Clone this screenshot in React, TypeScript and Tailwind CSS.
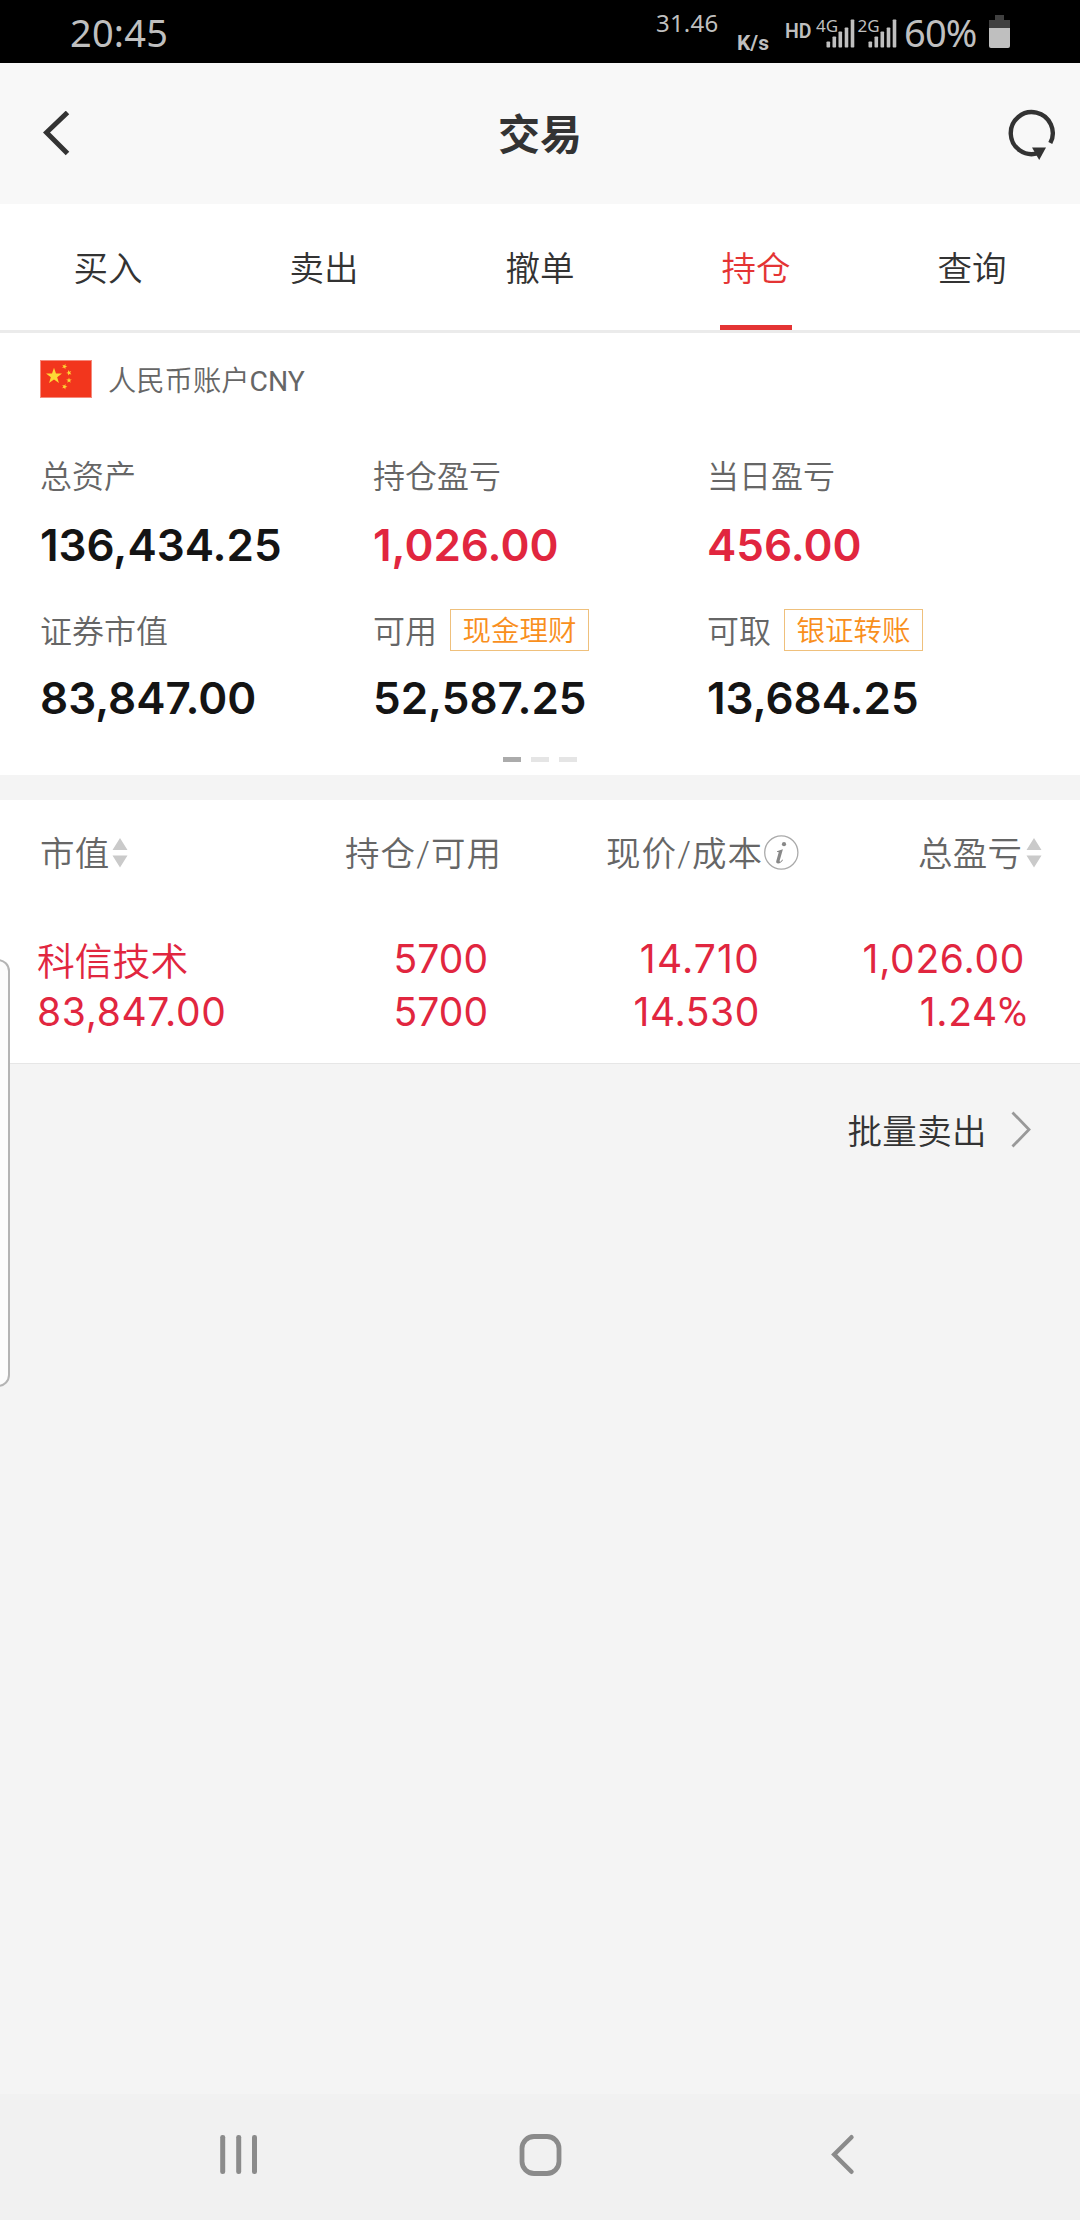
import type { ReactNode } from 'react'

const TABS = ['买入', '卖出', '撤单', '持仓', '查询']
const ACTIVE_TAB = '持仓'

interface Stat {
  label: string
  value: string
  action?: string
  gain?: boolean
}

const STATS: Stat[] = [
  { label: '总资产', value: '136,434.25' },
  { label: '持仓盈亏', value: '1,026.00', gain: true },
  { label: '当日盈亏', value: '456.00', gain: true },
  { label: '证券市值', value: '83,847.00' },
  { label: '可用', value: '52,587.25', action: '现金理财' },
  { label: '可取', value: '13,684.25', action: '银证转账' },
]

function SignalBars() {
  return (
    <svg width="29" height="29" viewBox="0 0 29 29" fill="#bfbfbf" aria-hidden="true">
      <rect x="0.5" y="22.5" width="3.6" height="6" rx="0.8" />
      <rect x="6.5" y="17.5" width="3.6" height="11" rx="0.8" />
      <rect x="12.5" y="12.5" width="3.6" height="16" rx="0.8" />
      <rect x="18.7" y="8.5" width="3.6" height="20" rx="0.8" />
      <rect x="24.7" y="0.5" width="3.6" height="28" rx="0.8" />
    </svg>
  )
}

function Signal({ network }: { network: string }) {
  return (
    <div className="relative flex h-[29px] w-[41.5px] items-end pl-[9px]">
      <SignalBars />
      <span className="absolute -left-px -top-px bg-black text-[17px] leading-[15px]">{network}</span>
    </div>
  )
}

function StatusBar() {
  return (
    <div className="flex h-[63px] items-start bg-black pl-[70px] font-['Noto_Sans',sans-serif] text-[#bfbfbf]">
      <span className="w-[586px] pt-[7px] text-[38px] leading-[50px] tracking-[0.2px]">20:45</span>
      <span className="w-[81px] pt-[6px] text-[24px] leading-[33px] tracking-[0.2px]">31.46</span>
      <span className="w-[48px] pt-[31px] font-[Roboto] text-[21px] font-bold leading-[24px]">K/s</span>
      <span className="w-[32px] pt-[20px] font-[Roboto] text-[19.5px] font-semibold leading-[24px]">HD</span>
      <div className="flex pt-[19px]">
        <Signal network="4G" />
        <Signal network="2G" />
      </div>
      <span className="ml-[4px] w-[85px] pt-[7px] text-[38px] leading-[50px] tracking-[-0.8px]">60%</span>
      <svg className="mt-[15px]" width="21" height="33" viewBox="0 0 21 33" aria-hidden="true">
        <path d="M6 0h9v5h6v8H0V5h6z" fill="#404040" />
        <path d="M0 13h21v18a2 2 0 0 1-2 2H2a2 2 0 0 1-2-2z" fill="#bfbfbf" />
      </svg>
    </div>
  )
}

function TitleBar() {
  return (
    <header className="flex h-[141px] items-center justify-between bg-[#f8f8f8] pl-[43px] pr-[24px]">
      <svg width="33" height="46" viewBox="0 0 33 46" fill="none" aria-hidden="true">
        <path d="M24.5 1.5 3.5 21.5 24.5 42.5" stroke="#333" strokeWidth="5" />
      </svg>
      <h1 className="pt-[4px] text-[42px] font-bold leading-[50px] text-[#333]">交易</h1>
      <svg width="52" height="52" viewBox="0 0 52 52" fill="none" aria-hidden="true">
        <path d="M46.3 35A21 21 0 1 0 34 45.2" stroke="#333" strokeWidth="4.4" />
        <path d="M28 39.5h14L35.2 52z" fill="#333" />
      </svg>
    </header>
  )
}

function TabBar() {
  return (
    <nav className="flex h-[129px] border-b-[3px] border-[#ebebeb]">
      {TABS.map((tab) => {
        const active = tab === ACTIVE_TAB
        return (
          <div key={tab} className="flex flex-1 flex-col items-center justify-between">
            <span
              className={`pt-[43px] text-[34.5px] font-[350] leading-[44px] ${active ? 'text-[#e43434]' : 'text-[#333]'}`}
            >
              {tab}
            </span>
            {active && <span className="h-[5px] w-[72px] bg-[#e43434]" />}
          </div>
        )
      })}
    </nav>
  )
}

function Flag() {
  const star = 'M0-8 1.9-2.5 7.6-2.5 3 1 4.7 6.5 0 3.2-4.7 6.5-3 1-7.6-2.5-1.9-2.5z'
  return (
    <svg width="52" height="38" viewBox="0 0 52 38" fill="#fdd835" aria-hidden="true">
      <rect x="0.5" y="0.5" width="51" height="37" fill="#f2361d" stroke="#f58a7c" />
      <path d={star} transform="translate(14 16.2) scale(1.05)" />
      <path d={star} transform="translate(24.5 6.5) rotate(20) scale(.36)" />
      <path d={star} transform="translate(29 12.8) rotate(-20) scale(.36)" />
      <path d={star} transform="translate(29 20.3) scale(.36)" />
      <path d={star} transform="translate(24.5 26.7) rotate(20) scale(.36)" />
    </svg>
  )
}

function AccountSummary() {
  return (
    <section className="h-[442px] pt-[27px] font-[350]">
      <div className="flex h-[38px] items-center gap-[16px] pl-[40px] text-[28.3px] text-[#666]">
        <Flag />
        <span className="pt-[6px] leading-[38px]">
          人民币账户<span className="font-normal">CNY</span>
        </span>
      </div>
      <div className="grid grid-cols-[333px_334px_1fr] pl-[40px] pt-[57px]">
        {STATS.map((stat, i) => (
          <div key={stat.label} className="h-[153px]">
            <div className="flex h-[44px] items-center text-[32px] leading-[44px] text-[#666]">
              <span className={i < 3 ? '' : 'pt-[3px]'}>{stat.label}</span>
              {stat.action && (
                <span className="ml-[13px] flex h-[42px] w-[139px] items-center justify-center border-[1.5px] border-[#efc07c] pt-[3px] text-[28.5px] text-[#f98f1c]">
                  {stat.action}
                </span>
              )}
            </div>
            <div
              className={`pt-[24px] font-[Inter] text-[44px] font-[570] leading-[44px] ${stat.gain ? 'text-[#e1263f]' : 'text-[#141414]'}`}
            >
              {stat.value}
            </div>
          </div>
        ))}
      </div>
      <div className="-mt-[4px] flex justify-center gap-[10px]">
        <span className="h-[5px] w-[18px] bg-[#ababab]" />
        <span className="h-[5px] w-[18px] bg-[#e5e5e5]" />
        <span className="h-[5px] w-[18px] bg-[#e5e5e5]" />
      </div>
    </section>
  )
}

function SortIcon() {
  return (
    <svg width="16" height="30" viewBox="0 0 16 30" fill="#cacaca" aria-hidden="true">
      <path d="M8 0 15.5 12H0.5zM8 29.5 0.5 17.5H15.5z" />
    </svg>
  )
}

function InfoIcon() {
  return (
    <svg width="35" height="36" viewBox="0 0 35 36" fill="none" aria-hidden="true">
      <circle cx="17.3" cy="17.5" r="16.6" stroke="#aaa" strokeWidth="1.3" />
      <circle cx="20" cy="9.2" r="2.1" fill="#888" />
      <path d="M13 16.2c2-.8 3.6-1.3 5.9-2l-3.2 11.4c-.3 1.1.3 1.3 1 .8.6-.4 1.1-1 1.7-1.8l.6.4c-1.5 2.3-3 3.4-4.8 3.4-1.7 0-2.3-1-1.9-2.5l2.3-8.1c.2-.8-.1-1-1.6-.9z" fill="#888" />
    </svg>
  )
}

function Cell({ top, bottom, className }: { top: ReactNode; bottom: ReactNode; className: string }) {
  return (
    <div className={`flex flex-col ${className}`}>
      <span className="h-[53px]">{top}</span>
      <span className="h-[53px]">{bottom}</span>
    </div>
  )
}

function Holdings() {
  return (
    <section className="h-[264px] border-b border-[#e6e6e6] bg-white">
      <div className="flex h-[106px] items-center text-[34.5px] font-[350] leading-[44px] text-[#666]">
        <div className="flex w-[345px] items-center gap-[2px] pl-[40px]">
          <span className="pt-[2px] tracking-[0.3px]">市值</span>
          <SortIcon />
        </div>
        <span className="w-[261px] pt-[2px] tracking-[1.1px]">持仓/可用</span>
        <div className="flex w-[312px] items-center gap-[1px]">
          <span className="pt-[2px] tracking-[1.1px]">现价/成本</span>
          <InfoIcon />
        </div>
        <div className="flex items-center gap-[4px]">
          <span className="pt-[2px] tracking-[0.3px]">总盈亏</span>
          <SortIcon />
        </div>
      </div>
      <div className="flex pt-[26px] font-[Inter,'Noto_Sans_CJK_SC',sans-serif] text-[39px] leading-[53px] text-[#e1263f]">
        <Cell
          className="w-[250px] pl-[37px]"
          top={<span className="block pt-[3px] text-[37.8px] font-[350]">科信技术</span>}
          bottom={<span className="tracking-[0.65px]">83,847.00</span>}
        />
        <Cell className="w-[238px] items-end" top="5700" bottom="5700" />
        <Cell
          className="w-[271px] items-end"
          top={<span className="-mr-px tracking-[1.2px]">14.710</span>}
          bottom={<span className="-mr-px tracking-[0.6px]">14.530</span>}
        />
        <Cell
          className="w-[266px] items-end"
          top={<span className="tracking-[0.7px]">1,026.00</span>}
          bottom={
            <span className="-mr-[2px]">
              <span className="tracking-[0.6px]">1.24</span>
              <span className="font-[Roboto] text-[40px]">%</span>
            </span>
          }
        />
      </div>
    </section>
  )
}

function NavigationBar() {
  return (
    <footer className="flex h-[126px] items-center bg-[#f1f1f1] pb-[4px] pl-[219px]">
      <svg width="300" height="42" viewBox="0 0 300 42" fill="#8b8b8b" aria-hidden="true">
        <rect x="1.2" y="1" width="5" height="39" rx="2.3" />
        <rect x="17.2" y="1" width="5" height="39" rx="2.3" />
        <rect x="33" y="1" width="5" height="39" rx="2.3" />
      </svg>
      <svg width="312" height="42" viewBox="0 0 312 42" fill="none" aria-hidden="true">
        <rect x="3" y="2.5" width="37" height="37" rx="12" stroke="#8b8b8b" strokeWidth="4.8" />
      </svg>
      <svg width="24" height="42" viewBox="0 0 24 42" fill="none" aria-hidden="true">
        <path d="M20.5 3.2 3.2 20.5 20.5 37.8" stroke="#8b8b8b" strokeWidth="4.4" strokeLinecap="round" />
      </svg>
    </footer>
  )
}

export default function App() {
  return (
    <div className="relative flex h-[2220px] w-[1080px] flex-col overflow-hidden bg-white font-[Roboto,'Noto_Sans_CJK_SC',sans-serif]">
      <StatusBar />
      <TitleBar />
      <TabBar />
      <AccountSummary />
      <main className="flex-1 bg-[#f4f4f4] pt-[25px]">
        <Holdings />
        <div className="flex h-[130px] items-center justify-end gap-[24px] pr-[49px] text-[34.5px] font-[350] text-[#333]">
          <span className="pt-[5px] leading-[44px] tracking-[0.4px]">批量卖出</span>
          <svg width="20" height="37" viewBox="0 0 20 37" fill="none" aria-hidden="true">
            <path d="M1.5 1.5 18 18.5 1.5 35.5" stroke="#999" strokeWidth="2.8" />
          </svg>
        </div>
      </main>
      <NavigationBar />
      {/* edge panel handle floating over the page */}
      <div className="absolute -left-[20px] top-[959px] h-[428px] w-[30px] rounded-[12px] border-2 border-[#b4b4b4] bg-[#fcfcfc]" />
    </div>
  )
}
